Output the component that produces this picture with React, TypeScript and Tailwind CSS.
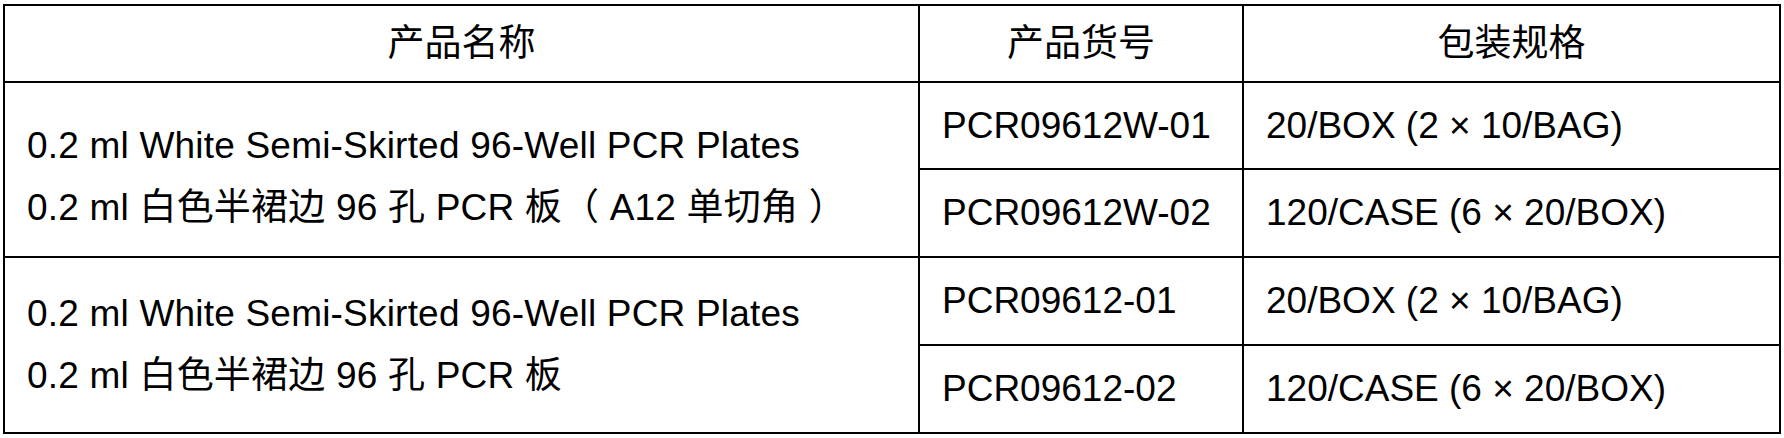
const font = {
  fontFamily: '"Liberation Sans", Arial, "Noto Sans CJK SC", sans-serif',
};

type Group = {
  name: string[];
  pad: string;
  items: { code: string; pack: string; h: string }[];
};

const groups: Group[] = [
  {
    name: [
      "0.2 ml White Semi-Skirted 96-Well PCR Plates",
      "0.2 ml 白色半裙边 96 孔 PCR 板（ A12 单切角 ）",
    ],
    pad: "pt-[14px]",
    items: [
      { code: "PCR09612W-01", pack: "20/BOX (2 × 10/BAG)", h: "h-[87px]" },
      { code: "PCR09612W-02", pack: "120/CASE (6 × 20/BOX)", h: "h-[88px]" },
    ],
  },
  {
    name: [
      "0.2 ml White Semi-Skirted 96-Well PCR Plates",
      "0.2 ml 白色半裙边 96 孔 PCR 板",
    ],
    pad: "pt-0",
    items: [
      { code: "PCR09612-01", pack: "20/BOX (2 × 10/BAG)", h: "h-[88px]" },
      { code: "PCR09612-02", pack: "120/CASE (6 × 20/BOX)", h: "h-[88px]" },
    ],
  },
];

export default function App() {
  return (
    <div className="w-[1784px] h-[438px] bg-white pt-1 pl-[3px]" style={font}>
      <table className="w-[1776px] table-fixed border-collapse border-2 border-black text-[37px] text-black">
        <colgroup>
          <col className="w-[915px]" />
          <col className="w-[324px]" />
          <col className="w-[537px]" />
        </colgroup>
        <thead>
          <tr className="h-[77px]">
            <th className="border-2 border-black font-normal text-center">产品名称</th>
            <th className="border-2 border-black font-normal text-center">产品货号</th>
            <th className="border-2 border-black font-normal text-center">包装规格</th>
          </tr>
        </thead>
        <tbody>
          {groups.map((g) =>
            g.items.map((it, i) => (
              <tr key={it.code} className={it.h}>
                {i === 0 && (
                  <td
                    rowSpan={2}
                    className={`border-2 border-black pl-[22px] pr-6 align-middle leading-[62px] whitespace-nowrap tracking-[0.2px] ${g.pad}`}
                  >
                    {g.name.map((line) => (
                      <div key={line}>{line}</div>
                    ))}
                  </td>
                )}
                <td className="border-2 border-black pl-[22px] pr-4 align-middle whitespace-nowrap">
                  {it.code}
                </td>
                <td className="border-2 border-black pl-[22px] pr-4 align-middle whitespace-nowrap">
                  {it.pack}
                </td>
              </tr>
            )),
          )}
        </tbody>
      </table>
    </div>
  );
}
